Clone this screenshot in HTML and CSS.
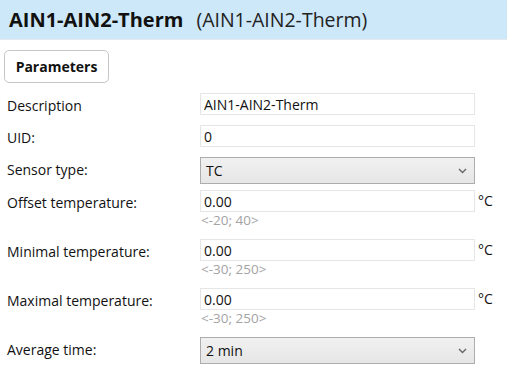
FILE: index.html
```html
<!DOCTYPE html>
<html lang="en">
<head>
    <meta charset="UTF-8">
    <meta name="viewport" content="width=device-width, initial-scale=1.0">
    <title>AIN1-AIN2-Therm</title>
    <link rel="stylesheet" href="styles.css">
</head>
<body>
    <div class="header">
        <span class="title">AIN1-AIN2-Therm</span>
        <span class="subtitle">(AIN1-AIN2-Therm)</span>
    </div>

    <div class="tabs">
        <button class="tab">Parameters</button>
    </div>

    <div class="form">
        <div class="row">
            <label>Description</label>
            <div class="field"><input type="text" value="AIN1-AIN2-Therm"></div>
        </div>
        <div class="row">
            <label>UID:</label>
            <div class="field"><input type="text" value="0"></div>
        </div>
        <div class="row select-row">
            <label>Sensor type:</label>
            <div class="field">
                <div class="select">
                    <span>TC</span>
                    <svg class="chevron" width="9" height="6" viewBox="0 0 9 6"><path d="M1 1l3.5 3.5L8 1" fill="none" stroke="#666" stroke-width="1.4"/></svg>
                </div>
            </div>
        </div>
        <div class="row">
            <label>Offset temperature:</label>
            <div class="field">
                <input type="text" value="0.00">
                <div class="range">&lt;-20; 40&gt;</div>
            </div>
            <span class="unit">°C</span>
        </div>
        <div class="row">
            <label>Minimal temperature:</label>
            <div class="field">
                <input type="text" value="0.00">
                <div class="range">&lt;-30; 250&gt;</div>
            </div>
            <span class="unit">°C</span>
        </div>
        <div class="row">
            <label>Maximal temperature:</label>
            <div class="field">
                <input type="text" value="0.00">
                <div class="range">&lt;-30; 250&gt;</div>
            </div>
            <span class="unit">°C</span>
        </div>
        <div class="row select-row">
            <label>Average time:</label>
            <div class="field">
                <div class="select">
                    <span>2 min</span>
                    <svg class="chevron" width="9" height="6" viewBox="0 0 9 6"><path d="M1 1l3.5 3.5L8 1" fill="none" stroke="#666" stroke-width="1.4"/></svg>
                </div>
            </div>
        </div>
    </div>
</body>
</html>
```

FILE: styles.css
```css
body {
    font-family: "Open Sans", "Noto Sans", sans-serif;
    background-color: #fff;
    color: #111;
    margin: 0;
}
.header {
    height: 40px;
    background-color: #cde8f9;
    border-bottom: 1px solid #e2eaf0;
    box-sizing: border-box;
    padding-left: 9px;
    display: flex;
    align-items: center;
    gap: 13px;
}
.title {
    font-size: 20px;
    font-weight: bold;
    color: #111;
}
.subtitle {
    font-size: 19.5px;
    color: #222;
}
.tabs {
    padding: 10px 0 0 4px;
}
.tab {
    width: 105px;
    height: 33px;
    font-family: inherit;
    font-size: 14px;
    font-weight: bold;
    color: #111;
    background-color: #fff;
    border: 1px solid #c6c6c6;
    border-radius: 5px;
    padding: 0;
}
.form {
    padding: 10px 0 0 7px;
}
.row {
    display: grid;
    grid-template-columns: 193px 275px auto;
    align-items: start;
    margin-bottom: 10px;
}
.select-row {
    margin-bottom: 6px;
}
label {
    font-size: 14px;
    line-height: 19px;
    padding-top: 3px;
}
input {
    display: block;
    width: 100%;
    height: 22px;
    box-sizing: border-box;
    border: 1px solid #e6e6e6;
    padding: 0 3px;
    font-family: inherit;
    font-size: 14px;
    color: #111;
    outline: none;
}
.range {
    font-size: 13.5px;
    line-height: 17px;
    color: #a3a3a3;
    padding-left: 1px;
}
.unit {
    font-size: 14px;
    line-height: 22px;
    padding-left: 3px;
}
.select {
    height: 27px;
    box-sizing: border-box;
    border: 1px solid #adadad;
    background: linear-gradient(#f1f1f1, #e6e6e6);
    display: flex;
    align-items: center;
    justify-content: space-between;
    padding: 0 7px 0 5px;
    font-size: 14px;
}
.chevron {
    display: block;
}
```
